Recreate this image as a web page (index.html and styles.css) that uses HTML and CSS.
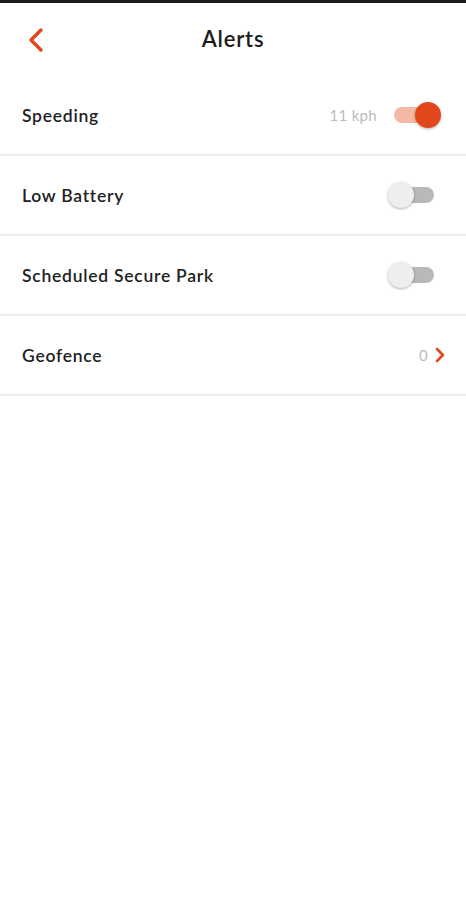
FILE: index.html
```html
<!DOCTYPE html>
<html lang="en">
<head>
    <meta charset="UTF-8">
    <meta name="viewport" content="width=device-width, initial-scale=1.0">
    <title>Alerts</title>
    <link rel="stylesheet" href="styles.css">
</head>
<body>
    <div class="topbar"></div>
    <div class="header">
        <a class="back" href="#">
            <svg width="18" height="26" viewBox="0 0 18 26">
                <path d="M14 3 L4 13 L14 23" fill="none" stroke="#e2471c" stroke-width="3.4" stroke-linecap="round" stroke-linejoin="round"/>
            </svg>
        </a>
        <h1>Alerts</h1>
    </div>

    <div class="list">
        <div class="row">
            <span class="label">Speeding</span>
            <div class="right">
                <span class="value">11 kph</span>
                <div class="toggle on"><span class="thumb"></span></div>
            </div>
        </div>
        <div class="row">
            <span class="label">Low Battery</span>
            <div class="right">
                <div class="toggle"><span class="thumb"></span></div>
            </div>
        </div>
        <div class="row">
            <span class="label">Scheduled Secure Park</span>
            <div class="right">
                <div class="toggle"><span class="thumb"></span></div>
            </div>
        </div>
        <div class="row">
            <span class="label">Geofence</span>
            <div class="right link">
                <span class="value">0</span>
                <svg width="12" height="16" viewBox="0 0 12 16">
                    <path d="M3 2 L9 8 L3 14" fill="none" stroke="#e2471c" stroke-width="2.6" stroke-linecap="round" stroke-linejoin="round"/>
                </svg>
            </div>
        </div>
    </div>
</body>
</html>
```

FILE: styles.css
```css
body {
    margin: 0;
    background: #fff;
    font-family: Lato, "Open Sans", sans-serif;
    color: #222;
}
.topbar {
    height: 3px;
    background: #1a1a1a;
}
.header {
    height: 73px;
    display: flex;
    align-items: center;
    justify-content: center;
    position: relative;
}
.header .back {
    position: absolute;
    left: 27px;
    top: 24px;
}
.header h1 {
    margin: 0;
    font-size: 22px;
    font-weight: 600;
    letter-spacing: 0.8px;
    color: #1c1c1c;
    padding-bottom: 2px;
}
.row {
    height: 78px;
    display: flex;
    align-items: center;
    justify-content: space-between;
    padding: 0 22px;
    border-bottom: 2px solid #eeeeee;
}
.row .label {
    font-size: 17.5px;
    font-weight: 600;
    color: #222;
    letter-spacing: 0.75px;
}
.right {
    display: flex;
    align-items: center;
}
.right .value {
    font-size: 15px;
    color: #bbb;
    letter-spacing: 0.3px;
    margin-right: 17px;
}
.right.link {
    margin-right: -2px;
}
.right.link .value {
    margin-right: 6px;
}
.toggle {
    width: 40px;
    height: 16px;
    border-radius: 8px;
    background: #b9b9b9;
    position: relative;
    margin-right: 10px;
}
.toggle .thumb {
    position: absolute;
    width: 26px;
    height: 26px;
    border-radius: 50%;
    background: #eeeeee;
    top: -5px;
    left: -6px;
    box-shadow: 0 1px 3px rgba(0, 0, 0, 0.3);
}
.toggle.on {
    background: #f4b9a6;
}
.toggle.on .thumb {
    background: #e2471c;
    left: 21px;
}
```
